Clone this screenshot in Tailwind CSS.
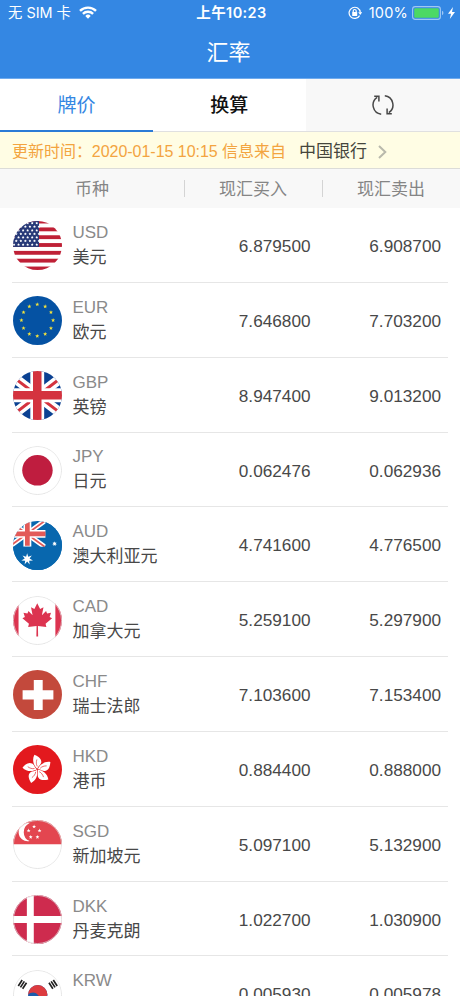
<!DOCTYPE html>
<html lang="zh-CN">
<head>
    <meta charset="UTF-8">
    <meta name="viewport" content="width=device-width, initial-scale=1.0">
    <title>汇率</title>
    <script src="https://cdn.jsdelivr.net/npm/@tailwindcss/browser@4"></script>
</head>
<body class="bg-white h-screen overflow-hidden font-['Liberation_Sans','Noto_Sans_CJK_SC',sans-serif] text-[17px] text-[#484848]">
    <header class="h-[79px] bg-[#3487e3] text-white border-b border-[#6fabee]">
        <!-- Status bar -->
        <div class="h-[25px] flex items-center justify-between pl-[8px] pr-[5px] text-[14.5px] font-['Inter','Noto_Sans_CJK_SC',sans-serif]">
            <div class="w-[150px] flex items-center gap-2 whitespace-nowrap">
                <span class="text-[14.4px]">无 SIM 卡</span>
                <svg class="w-[18px] h-[13px]" viewBox="0 0 18 13" fill="none" stroke="white" stroke-width="2.4">
                    <path d="M1 4.9a11.3 11.3 0 0 1 16 0M3.9 7.8a7.2 7.2 0 0 1 10.2 0" />
                    <path d="M9 12.7l-2.7-2.8a3.8 3.8 0 0 1 5.4 0z" fill="white" stroke="none" />
                </svg>
            </div>
            <div class="text-center text-[14.5px] font-semibold tracking-[0.4px] whitespace-nowrap">上午10:23</div>
            <div class="w-[150px] flex items-center justify-end whitespace-nowrap">
                <svg class="w-[14px] h-[14px] mr-[7px] shrink-0" viewBox="0 0 14 14" fill="none" stroke="white" stroke-width="1.2">
                    <path d="M11.6 9.6A5.6 5.6 0 1 1 12.3 6.5" />
                    <path d="M10.2 6.3h4l-2 2.7z" fill="white" stroke="none" />
                    <rect x="4.2" y="6" width="5" height="4" rx=".5" fill="white" stroke="none" />
                    <path d="M5.2 6.3V5a1.5 1.5 0 0 1 3 0v1.3" />
                </svg>
                <span class="text-[14.5px] tracking-[0.2px]">100%</span>
                <svg class="w-[32px] h-[14px] ml-1 shrink-0" viewBox="0 0 32 14">
                    <rect x=".6" y=".6" width="27.8" height="12.8" rx="2.6" fill="none" stroke="#9fc8f4" stroke-width="1.1" />
                    <rect x="2.2" y="2.2" width="24.6" height="9.6" rx="1" fill="#4cd964" />
                    <path d="M30 4.8a2.4 2.4 0 0 1 0 4.4z" fill="#9fc8f4" />
                </svg>
                <svg class="w-[7px] h-[12px] ml-[4px] shrink-0" viewBox="0 0 7 12" fill="white"><path d="M5 0L0 6.7h3L1.8 12 7 4.9H4z" /></svg>
            </div>
        </div>
        <h1 class="h-[54px] pr-[3px] flex items-center justify-center text-[22px]">汇率</h1>
    </header>

    <nav class="h-[53px] grid grid-cols-[153px_152.5px_1fr] text-[19px] text-[#111]">
        <button class="pt-[3px] text-[#3487e3] border-b-2 border-[#2b7bd6]">牌价</button>
        <button class="pt-[2px] border-b border-[#e0e0e0] font-medium">换算</button>
        <button class="bg-[#f8f8f8] border-b border-[#e0e0e0] flex items-center justify-center">
            <svg class="w-[22px] h-[22px]" viewBox="0 0 22 22" fill="none" stroke="#484848" stroke-width="1.5">
                <path d="M9.2 20.2A9.2 9.2 0 0 1 5.2 3.4M12.8 1.8a9.2 9.2 0 0 1 4 16.8" />
                <path d="M2.2 2.3h4.7v5.2M19.8 19.7h-4.7v-5.2" />
            </svg>
        </button>
    </nav>

    <div class="h-[37px] flex items-center pl-3 pt-[3px] bg-[#fffde4] border-b border-[#dcdcd8] text-[#f3a440] text-[16px] whitespace-nowrap">
        <span class="tracking-[-0.03px]">更新时间：2020-01-15 10:15 信息来自</span>
        <span class="ml-[13px] text-[17px] text-[#45453c]">中国银行</span>
        <svg class="w-[9px] h-[14px] ml-[11px]" viewBox="0 0 9 14" fill="none" stroke="#b9b9ac" stroke-width="2"><path d="M1 1l6.3 6L1 13" /></svg>
    </div>

    <div class="h-[39px] flex items-center bg-[#f8f8f8] text-[#858585]">
        <div class="w-[185px] text-center border-r border-[#d4d4d4] h-[17px] leading-[20px]">币种</div>
        <div class="w-[138px] pr-[1px] text-center border-r border-[#d4d4d4] h-[17px] leading-[20px]">现汇买入</div>
        <div class="w-[137px] pr-[1px] text-center h-[17px] leading-[20px]">现汇卖出</div>
    </div>

    <ul id="rateList" class="px-3"></ul>

    <script>
        // n-pointed star centred on cx, cy
        function star(cx, cy, r, fill, n = 5, inner = 0.42) {
            let pts = [];
            for (let i = 0; i < n * 2; i++) {
                const a = Math.PI * i / n - Math.PI / 2;
                const d = i % 2 ? r * inner : r;
                pts.push((cx + d * Math.cos(a)).toFixed(2) + ',' + (cy + d * Math.sin(a)).toFixed(2));
            }
            return `<polygon points="${pts.join(' ')}" fill="${fill}"/>`;
        }

        function ring(n, cx, cy, radius, r, fill) {
            let out = '';
            for (let i = 0; i < n; i++) {
                const a = 2 * Math.PI * i / n - Math.PI / 2;
                out += star(cx + radius * Math.cos(a), cy + radius * Math.sin(a), r, fill);
            }
            return out;
        }

        function usFlag() {
            let out = '<rect width="50" height="50" fill="#fff"/>';
            for (let i = 0; i < 7; i++) out += `<rect y="${i * 7.9 - 1.4}" width="50" height="3.9" fill="#bf2036"/>`;
            out += '<rect width="26.3" height="26.2" fill="#283a78"/>';
            for (let y = 0; y < 7; y++) {
                for (let x = 0; x < 6; x++) out += star(1 + x * 4.6 + (y % 2 ? 2.3 : 0), 2.2 + y * 3.6, 1.4, '#fff', 5, 0.6);
            }
            return out;
        }

        const petal = '<path d="M0-.5C-4-3.5-6-9.5-3.5-14.7C-.5-13.5 4.2-11.5 3.7-7C3.2-4 .5-3.5 0-.5z" fill="#fff"/><path d="M-.2-3C-1.5-5-1.5-7.5-.8-10" fill="none" stroke="#e3191e" stroke-width=".6"/>';
        const trigram = '<path d="M-3.6-2.6h7.2M-3.6 0h7.2M-3.6 2.6h7.2" stroke="#222" stroke-width="1.7"/>';

        const flags = {
            USD: usFlag(),
            EUR: '<rect width="50" height="50" fill="#0552a3"/>' + ring(12, 24.5, 24.5, 16, 2.2, '#f3e23c'),
            GBP: `<rect width="50" height="50" fill="#0b4192"/>
                <path d="M-5 2L55 48M55 2L-5 48" stroke="#fff" stroke-width="10"/>
                <path d="M25 25L2 7.4M25 25L50 5.8M25 25L0 44.2M25 25L48 42.6" stroke="#d4333f" stroke-width="3"/>
                <path d="M24.5 0v50M0 24.5h50" stroke="#fff" stroke-width="14"/>
                <path d="M24.5 0v50M0 24.5h50" stroke="#d4333f" stroke-width="8.6"/>`,
            JPY: '<rect width="50" height="50" fill="#fff"/><circle cx="24.7" cy="24.6" r="15.4" fill="#bf1d3f"/>',
            AUD: `<rect width="50" height="50" fill="#0867ae"/>
                <path d="M-4 0L32 26M32 0L-4 26" stroke="#fff" stroke-width="5"/>
                <path d="M-4 0L32 26M32 0L-4 26" stroke="#e25a58" stroke-width="1.7"/>
                <path d="M14.5 0v26M0 13h33" stroke="#fff" stroke-width="8"/>
                <path d="M14.5 0v25M0 13h33" stroke="#e25a58" stroke-width="4.8"/>
                <path d="M0 26h33V0h17v50H0z" fill="#0867ae"/>`
                + star(14.3, 38.5, 6, '#fff', 7) + star(42, 23, 2.5, '#fff', 7, 0.5),
            CAD: `<rect width="50" height="50" fill="#fff"/><path d="M0 0h5.6v50H0zM42.8 0H50v50h-7.2z" fill="#dc3450"/>
                <path d="M24.5 7.3l-2.9 5.8-3.4-1.7 1.6 8-4.2-4.2-1 2.4-4-.7 1.4 4.2-2.5 1.3 6.6 5.7-.8 3.3 8.5-1.2-.2 10.8h1.8l-.2-10.8 8.5 1.2-.8-3.3 6.6-5.7-2.5-1.3 1.4-4.2-4 .7-1-2.4-4.2 4.2 1.600-8-3.4 1.7z" fill="#dc3450"/>`,
            CHF: '<rect width="50" height="50" fill="#c3493c"/><path d="M21 10.2h9v10.3h10.8v9.2H30v10.8h-9V29.7H9.7v-9.2H21z" fill="#fff"/>',
            HKD: '<rect width="50" height="50" fill="#e3191e"/>'
                + [2, 74, 146, 218, 290].map(a => `<g transform="translate(24.6 24.6) rotate(${a})">${petal}</g>`).join(''),
            SGD: `<rect width="50" height="50" fill="#fff"/><rect width="50" height="24.5" fill="#e34650"/>
                <path d="M16.8 3.3A9.2 9.2 0 1 0 16.8 21.3A9.8 9.8 0 0 1 16.8 3.3z" fill="#fff"/>` + ring(5, 21.3, 12.5, 5.8, 2.1, '#fff'),
            DKK: '<rect width="50" height="50" fill="#ce2b4e"/><path d="M17.5 0v50M0 24.8h50" stroke="#fff" stroke-width="7"/>',
            KRW: `<rect width="50" height="50" fill="#fff"/><circle cx="25" cy="25" r="9.8" fill="#1d5baa"/>
                <path d="M15.2 25a9.8 9.8 0 0 1 19.6 0c-2 3.5-7 3.5-9.8 0s-7.5-2.5-9.8 0z" fill="#dd3b3f"/>
                <g transform="translate(9.5 14.5) rotate(-57)">${trigram}</g>
                <g transform="translate(40.5 14.5) rotate(57)">${trigram}</g>
                <g transform="translate(9.5 35) rotate(57)">${trigram}</g>
                <g transform="translate(40.5 35) rotate(-57)">${trigram}</g>`
        };

        const rates = [
            ['USD', '美元', '6.879500', '6.908700'],
            ['EUR', '欧元', '7.646800', '7.703200'],
            ['GBP', '英镑', '8.947400', '9.013200'],
            ['JPY', '日元', '0.062476', '0.062936'],
            ['AUD', '澳大利亚元', '4.741600', '4.776500'],
            ['CAD', '加拿大元', '5.259100', '5.297900'],
            ['CHF', '瑞士法郎', '7.103600', '7.153400'],
            ['HKD', '港币', '0.884400', '0.888000'],
            ['SGD', '新加坡元', '5.097100', '5.132900'],
            ['DKK', '丹麦克朗', '1.022700', '1.030900'],
            ['KRW', '韩元', '0.005930', '0.005978']
        ];
        // flags with white at the rim get a hairline
        const outlined = ['JPY', 'CAD', 'SGD', 'DKK', 'KRW'];

        document.getElementById('rateList').innerHTML = rates.map(([code, name, buy, sell]) => `
            <li class="h-[74.85px] flex items-center border-b border-[#e6e6e6] pr-[7px]">
                <svg class="w-[49px] h-[49px] mt-[2px] ml-[1px] rounded-full overflow-hidden shrink-0" viewBox="0 0 49.5 49.5">
                    ${flags[code]}
                    ${outlined.includes(code) ? '<circle cx="24.75" cy="24.75" r="24.3" fill="none" stroke="#dedede" stroke-width=".8"/>' : ''}
                </svg>
                <div class="ml-[10.5px] flex-1 leading-[25px]">
                    <div class="text-[#8a8a8a]">${code}</div>
                    <div>${name}</div>
                </div>
                <div class="w-[100px] text-right text-[17.2px] pt-[4px]">${buy}</div>
                <div class="w-[130.5px] text-right text-[17.2px] pt-[4px]">${sell}</div>
            </li>`).join('');
    </script>
</body>
</html>
